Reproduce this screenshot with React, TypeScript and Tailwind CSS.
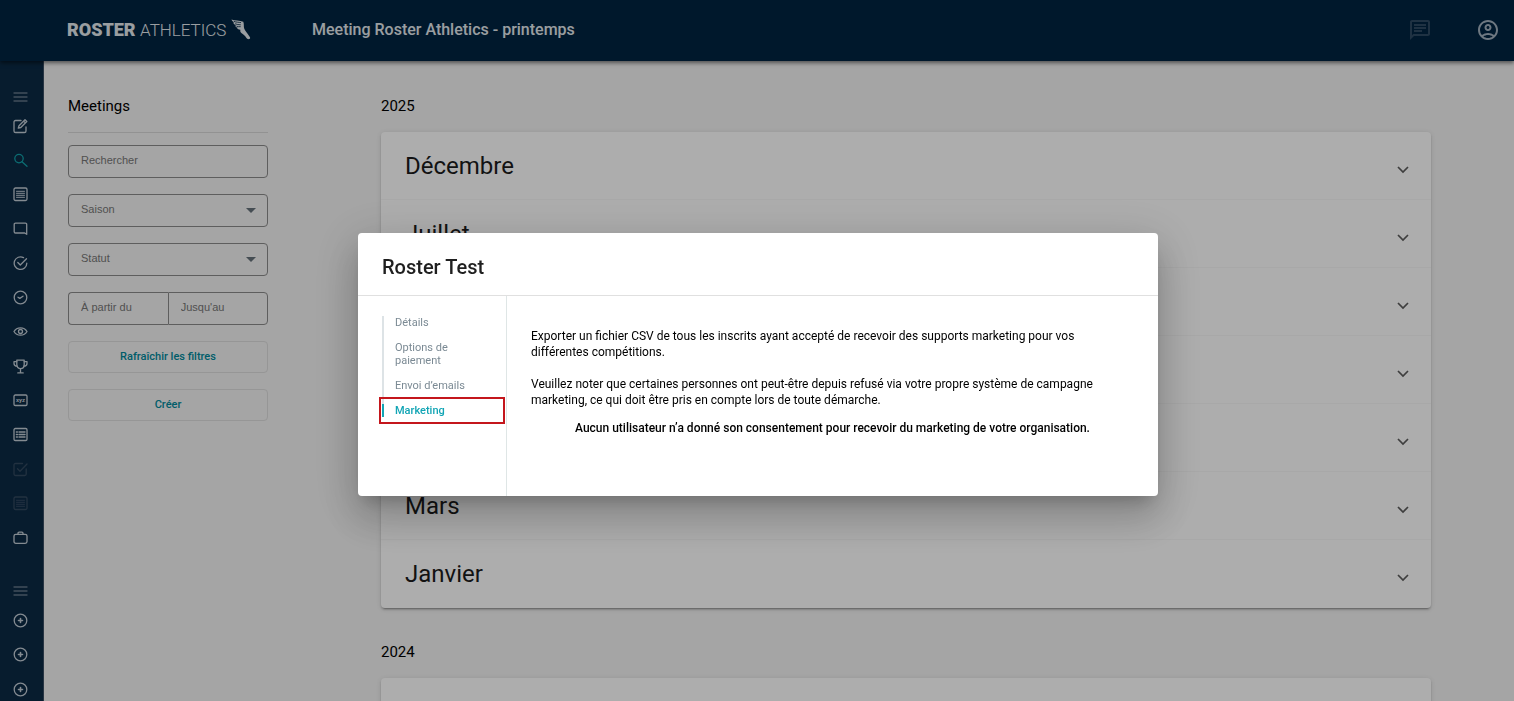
import type { ReactNode } from "react";
import { useState } from "react";
import { MdOutlineAccountCircle, MdOutlineChat } from "react-icons/md";

type NavItem = { label: string; icon: ReactNode; tone?: "active" | "disabled" };

const editIcon = (
  <>
    <path d="M8 1.500H2.600C1.600 1.500 1 2.100 1 3.100v8.800c0 1 .6 1.600 1.600 1.600h8.800c1 0 1.600-.6 1.600-1.600V8" />
    <path d="M12 .7l1.800 1.800-6 6-2.500.7.7-2.500z M10.600 2.100l1.800 1.800" />
  </>
);

const searchIcon = (
  <>
    <circle cx="6" cy="5.600" r="4.200" />
    <path d="M9 8.700l5 4.500" />
  </>
);

const listIcon = (
  <>
    <rect x="1" y="1" width="13" height="12.500" rx="1.500" />
    <path d="M3.500 4.300h8M3.500 6.300h8M3.500 8.300h8M3.500 10.300h8" strokeWidth="1" />
  </>
);

const commentIcon = (
  <path d="M13.700 13.300V3.500c0-.8-.5-1.300-1.300-1.300H2.500c-.8 0-1.300.5-1.300 1.300v7.200c0 .8.5 1.300 1.300 1.300h9.200z" />
);

const checkCircleIcon = (
  <>
    <path d="M10.500 1.600A6.300 6.300 0 1 0 13.800 7.200" />
    <path d="M4.800 6.500l2.500 2.500 6.200-6.200" />
  </>
);

const clockIcon = (
  <>
    <circle cx="7.500" cy="7.500" r="6.300" />
    <path d="M5 7.200l1.800 1.200 3.200-2.200" />
  </>
);

const eyeIcon = (
  <>
    <path d="M1 7.500C3.800 2.600 11.200 2.600 14 7.500C11.200 12.400 3.800 12.400 1 7.500z" />
    <circle cx="7.500" cy="7.500" r="2" />
  </>
);

const trophyIcon = (
  <>
    <path d="M3.800 1.200h7.400v4.300c0 2.500-1.500 4.200-3.700 4.200S3.800 8 3.800 5.500z" />
    <path d="M3.800 2.700H1v1.700c0 1.600 1.200 2.800 3.200 2.800M11.200 2.700H14v1.700c0 1.600-1.200 2.800-3.200 2.800M7.500 9.700v4M4.800 13.900h5.400" />
  </>
);

const xyzIcon = (
  <>
    <rect x="1" y="2" width="13" height="10.500" rx="1.300" />
    <text x="7.500" y="8.800" textAnchor="middle" fill="currentColor" stroke="none" fontSize="6" fontWeight="700">
      xyz
    </text>
  </>
);

const detailIcon = (
  <>
    <rect x="1" y="1.500" width="13" height="12" rx="1.300" />
    <path d="M3.400 5h1M6 5h6M3.400 7.500h1M6 7.500h6M3.400 10h1M6 10h6" strokeWidth="1.400" />
  </>
);

const taskIcon = (
  <>
    <path d="M9.500 1.500H2.500C1.600 1.500 1 2.100 1 3v9c0 .9.6 1.500 1.500 1.500h9.200c.9 0 1.500-.6 1.500-1.500V7" />
    <path d="M4.500 6.700l2.500 2.500L14 2" />
  </>
);

const briefcaseIcon = (
  <>
    <rect x="1" y="4.300" width="13" height="9" rx="1.800" />
    <path d="M5 4.300v-1c0-.7.400-1.100 1.100-1.100h2.800c.7 0 1.100.4 1.100 1.100v1" />
  </>
);

const plusIcon = (
  <>
    <circle cx="7.500" cy="7.500" r="6.300" />
    <path d="M7.500 5.500v4M5.500 7.500h4" strokeWidth="1.600" />
  </>
);

const mainNav: NavItem[] = [
  { label: "Modifier", icon: editIcon },
  { label: "Rechercher", icon: searchIcon, tone: "active" },
  { label: "Listes", icon: listIcon },
  { label: "Messages", icon: commentIcon },
  { label: "Validation", icon: checkCircleIcon },
  { label: "Horaires", icon: clockIcon },
  { label: "Aperçu", icon: eyeIcon },
  { label: "Résultats", icon: trophyIcon },
  { label: "Champs", icon: xyzIcon },
  { label: "Inscriptions", icon: detailIcon },
  { label: "Tâches", icon: taskIcon, tone: "disabled" },
  { label: "Rapports", icon: listIcon, tone: "disabled" },
  { label: "Organisation", icon: briefcaseIcon },
];

const addNav: NavItem[] = [
  { label: "Ajouter un meeting", icon: plusIcon },
  { label: "Ajouter une épreuve", icon: plusIcon },
  { label: "Ajouter un club", icon: plusIcon },
];

const years = [
  { year: "2025", months: ["Décembre", "Juillet", "Juin", "Mai", "Avril", "Mars", "Janvier"] },
  { year: "2024", months: ["Novembre"] },
];

const tabs = ["Détails", "Options de paiement", "Envoi d’emails", "Marketing"];

function Glyph({ children }: { children: ReactNode }) {
  return (
    <svg
      viewBox="0 0 15 15"
      className="size-[15px]"
      fill="none"
      stroke="currentColor"
      strokeWidth="1.300"
      strokeLinejoin="round"
      strokeLinecap="round"
      aria-hidden="true"
    >
      {children}
    </svg>
  );
}

function NavLink({ item }: { item: NavItem }) {
  const tone =
    item.tone === "active" ? "text-[#12a0a8]" : item.tone === "disabled" ? "text-[#33495f]" : "text-[#c3cdd6]";

  return (
    <a href="#" aria-label={item.label} className={`flex h-[34px] items-center justify-center ${tone}`}>
      <Glyph>{item.icon}</Glyph>
    </a>
  );
}

function MenuToggle() {
  return (
    <button type="button" aria-label="Menu" className="flex h-6 w-full items-center justify-center text-[#637688]">
      <Glyph>
        <path d="M1 3h13M1 7h13M1 11h13" />
      </Glyph>
    </button>
  );
}

function Logo() {
  return (
    <a href="#" className="flex w-[184px] items-center justify-between text-[18px] leading-6 whitespace-nowrap">
      <span>
        <span className="font-black">ROSTER</span> <span className="text-[17px] font-light">ATHLETICS</span>
      </span>
      <svg viewBox="0 0 20 21" className="h-[21px] w-5 shrink-0" fill="currentColor" aria-hidden="true">
        <path d="M.5.5c3 1.500 8 .6 11.800 2.200.9 2.300.2 4.600.9 6.800.6 1.800 2 3.300 3.200 5l2.600 3.700c.3.900 0 1.600-.7 1.900-1.500.2-2.600-.6-3.400-1.900-1-1.500-2.400-2.500-3.900-3.600-1.300-1-2.100-2.200-1.600-3.900-1.400.1-2.700-.4-3.500-1.400l1.500-.2c-1.500-.4-2.700-1.100-3.400-2.300l1.300.1C3.700 6 2.600 5 2.200 3.600l1.200.1C2 3 1 1.900.5.5z" />
        <path d="M2.800 2.300c2.300 1 4.800.9 7.200 1.300M4 4.800c1.800.8 3.800.8 5.800 1M5.500 7.200c1.400.5 2.800.6 4.200.5" stroke="#002441" strokeWidth=".800" fill="none" />
      </svg>
    </a>
  );
}

function Filters() {
  const field =
    "h-[33px] w-full rounded border border-[#8b8b8b] bg-transparent px-3 pb-[3px] font-['Liberation_Sans',sans-serif] text-[11px]";
  const action = "h-8 w-full rounded border border-[#dddddd] text-[11px] font-medium text-[#008a9c]";

  return (
    <aside className="w-[200px] shrink-0">
      <h1 className="border-b border-[#d8d8d8] pb-3.5 text-[15px] leading-6">Meetings</h1>
      <form className="mt-3 flex flex-col gap-4" onSubmit={(event) => event.preventDefault()}>
        <input aria-label="Rechercher" placeholder="Rechercher" className={`${field} placeholder:text-[#777777]`} />
        {["Saison", "Statut"].map((name) => (
          <div key={name} className="relative">
            <select aria-label={name} className={`${field} block appearance-none text-[#777777]`}>
              <option>{name}</option>
            </select>
            <svg
              viewBox="0 0 10 5"
              className="pointer-events-none absolute top-3.5 right-3 h-[5px] w-2.5 fill-[#66727b]"
              aria-hidden="true"
            >
              <path d="M0 0h10L5 5z" />
            </svg>
          </div>
        ))}
        <div className="flex">
          <input
            aria-label="À partir du"
            placeholder="À partir du"
            className={`${field} rounded-r-none border-r-0 placeholder:text-[#777777]`}
          />
          <input
            aria-label="Jusqu'au"
            placeholder="Jusqu'au"
            className={`${field} rounded-l-none placeholder:text-[#777777]`}
          />
        </div>
        <button type="submit" className={action}>
          Rafraîchir les filtres
        </button>
        <button type="button" className={action}>
          Créer
        </button>
      </form>
    </aside>
  );
}

function YearSection({ year, months }: { year: string; months: string[] }) {
  return (
    <section>
      <h2 className="text-[15px] leading-6">{year}</h2>
      <div className="mt-3.5 rounded bg-white shadow-[0_3px_1px_-2px_rgba(0,0,0,0.2),0_2px_2px_0_rgba(0,0,0,0.14),0_1px_5px_0_rgba(0,0,0,0.12)]">
        {months.map((month) => (
          <button
            key={month}
            type="button"
            className="flex h-[68px] w-full items-center justify-between border-b border-[#f8f8f8] pr-[22px] pl-6 text-left last:border-b-0"
          >
            <span className="text-2xl text-[#1b1b1b]">{month}</span>
            <svg viewBox="0 0 12 8" className="mt-2 h-2 w-3" fill="none" stroke="#5c5c5c" strokeWidth="1.700" aria-hidden="true">
              <path d="M1 1l5 5 5-5" />
            </svg>
          </button>
        ))}
      </div>
    </section>
  );
}

function MeetingDialog() {
  const [activeTab, setActiveTab] = useState("Marketing");

  return (
    <div className="fixed inset-0 z-20 flex items-center justify-center bg-black/32 pt-7 pl-0.5">
      <div
        role="dialog"
        aria-modal="true"
        aria-labelledby="dialog-title"
        className="flex min-h-[263px] w-full max-w-[800px] flex-col rounded bg-white shadow-[0_11px_15px_-7px_rgba(0,0,0,0.2),0_24px_38px_3px_rgba(0,0,0,0.14),0_9px_46px_8px_rgba(0,0,0,0.12)]"
      >
        <h2 id="dialog-title" className="border-b border-[#e0e0e0] px-6 pt-5 pb-3.5 text-xl font-medium text-[#1f1f1f]">
          Roster Test
        </h2>
        <div className="flex flex-1">
          <nav className="w-[149px] shrink-0 border-r border-[#dfe6e6] pt-5 pr-4 pl-6">
            <ul className="text-[11px] leading-[13px]">
              {tabs.map((tab) => {
                const isActive = tab === activeTab;

                return (
                  <li
                    key={tab}
                    className={`relative border-l-2 pl-[11px] ${isActive ? "border-[#12a5b5]" : "border-[#dde3e6] pb-3"}`}
                  >
                    <button
                      type="button"
                      onClick={() => setActiveTab(tab)}
                      className={`block w-full text-left ${isActive ? "font-medium text-[#12a5b5]" : "text-[#7b8a94]"}`}
                    >
                      {tab}
                    </button>
                    {isActive && (
                      <span className="pointer-events-none absolute -inset-y-[7px] -right-[15px] -left-[5px] border-2 border-[#c4161c]" />
                    )}
                  </li>
                );
              })}
            </ul>
          </nav>
          <div className="flex-1 px-6 pt-8 text-xs leading-4">
            <p>
              Exporter un fichier CSV de tous les inscrits ayant accepté de recevoir des supports marketing pour vos
              différentes compétitions.
            </p>
            <p className="mt-4">
              Veuillez noter que certaines personnes ont peut-être depuis refusé via votre propre système de campagne
              marketing, ce qui doit être pris en compte lors de toute démarche.
            </p>
            <p className="mt-3 text-center font-medium">
              Aucun utilisateur n’a donné son consentement pour recevoir du marketing de votre organisation.
            </p>
          </div>
        </div>
      </div>
    </div>
  );
}

export default function App() {
  return (
    <div className="flex h-screen flex-col overflow-hidden bg-[#f3f3f3] font-[Roboto,sans-serif] text-black">
      <header className="z-10 flex h-[61px] shrink-0 items-center bg-[#002441] pr-3.5 pb-0.5 pl-[67px] text-[#e4e9ee] shadow-[0_2px_4px_rgba(0,0,0,0.5)]">
        <Logo />
        <p className="ml-[61px] text-base font-medium">Meeting Roster Athletics - printemps</p>
        <button type="button" aria-label="Messages" className="mr-11 ml-auto text-[#2e4a63]">
          <MdOutlineChat className="size-6" />
        </button>
        <button type="button" aria-label="Compte" className="text-[#a3b1bf]">
          <MdOutlineAccountCircle className="size-6" />
        </button>
      </header>

      <div className="flex min-h-0 flex-1">
        <nav className="w-11 shrink-0 border-r border-[#3c4f63] bg-[#0b2a45] pt-6 pr-[3px]">
          <MenuToggle />
          <div className="flex h-[446px] flex-col justify-between">
            {mainNav.map((item) => (
              <NavLink key={item.label} item={item} />
            ))}
          </div>
          <div className="mt-6">
            <MenuToggle />
          </div>
          <div className="flex h-[103px] flex-col justify-between">
            {addNav.map((item) => (
              <NavLink key={item.label} item={item} />
            ))}
          </div>
        </nav>

        <div className="flex flex-1 pt-[33px] pl-6">
          <Filters />
          <main className="mr-[83px] ml-[113px] flex flex-1 flex-col gap-8">
            {years.map((section) => (
              <YearSection key={section.year} year={section.year} months={section.months} />
            ))}
          </main>
        </div>
      </div>

      <MeetingDialog />
    </div>
  );
}
